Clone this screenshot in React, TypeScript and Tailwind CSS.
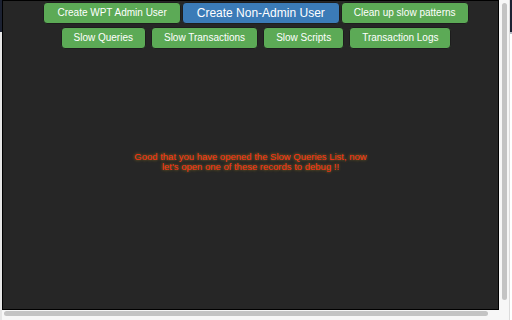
import React from 'react';

const greenBtn =
  'h-[22px] px-[12px] rounded-[4px] border border-[#1d1d1d] bg-[#5caa56] text-white text-[10px] leading-none flex items-center';

export default function App() {
  const row2 = ['Slow Queries', 'Slow Transactions', 'Slow Scripts', 'Transaction Logs'];

  return (
    <div
      className="w-[512px] h-[320px] flex bg-[#f4f4f4] overflow-hidden"
      style={{ fontFamily: '"Liberation Sans", Arial, sans-serif' }}
    >
      {/* page peeking on the left */}
      <div className="w-[2px] flex flex-col">
        <div className="h-[32px] bg-[#1c2233]" />
        <div className="flex-1 bg-[#e6e6e6]" />
      </div>

      {/* scrolling frame */}
      <div className="w-[507px] flex flex-col bg-[#f7f7f7]">
        <div className="flex">
          <div className="w-[497px] h-[310px] border border-black bg-[#262626] flex flex-col">
            <div className="flex flex-col items-center gap-[3px] pt-[1px] pl-[11px]">
              <div className="flex gap-[1px]">
                <button className={greenBtn + ' px-[13px]'}>Create WPT Admin User</button>
                <button className="h-[22px] px-[14px] rounded-[4px] border border-[#1d1d1d] bg-[#3b7bb7] text-white text-[12px] leading-none flex items-center">
                  Create Non-Admin User
                </button>
                <button className={greenBtn}>Clean up slow patterns</button>
              </div>
              <div className="flex gap-[5px]">
                {row2.map((label) => (
                  <button key={label} className={greenBtn}>
                    {label}
                  </button>
                ))}
              </div>
            </div>

            <div className="mt-[103px] text-center text-[9.5px] leading-[10px] text-[#ff2f14] [text-shadow:0_0_3px_rgba(210,170,30,0.8)]">
              Good that you have opened the Slow Queries List, now
              <br />
              let's open one of these records to debug !!
            </div>
          </div>

          {/* vertical scrollbar */}
          <div className="flex-1 flex justify-center pt-[3px]">
            <div className="w-[5px] h-[297px] rounded-full bg-[#c4c4c4]" />
          </div>
        </div>

        {/* horizontal scrollbar */}
        <div className="pl-[2px] pt-[1px]">
          <div className="w-[484px] h-[5px] rounded-full bg-[#c4c4c4]" />
        </div>
      </div>

      {/* page peeking on the right */}
      <div className="flex-1 flex flex-col border-l border-[#dcdcdc] bg-white">
        <div className="h-[32px] bg-[#1c2233]" />
        <div className="h-[2px] bg-[#b8bcc6]" />
      </div>
    </div>
  );
}
